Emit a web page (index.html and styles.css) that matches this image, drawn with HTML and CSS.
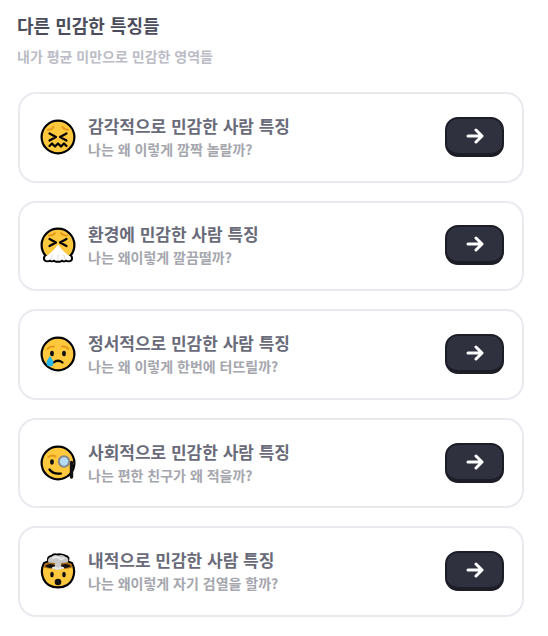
FILE: index.html
```html
<!DOCTYPE html>
<html lang="ko">
<head>
<meta charset="utf-8">
<meta name="viewport" content="width=device-width, initial-scale=1">
<title>다른 민감한 특징들</title>
<link rel="stylesheet" href="styles.css">
</head>
<body>
<main class="page">
  <header class="intro">
    <h1 class="intro-title">다른 민감한 특징들</h1>
    <p class="intro-sub">내가 평균 미만으로 민감한 영역들</p>
  </header>
  <ul class="cards">
    <li class="card">
      <svg class="face" viewBox="0 0 36 36" aria-hidden="true">
        <circle class="skin" cx="18" cy="18" r="16.4"/>
        <path class="brow" d="M8 10.800q4 0 5.500-2.800M28 10.800q-4 0-5.500-2.800"/>
        <path class="line" d="M9.500 14.500l6.500 3.500-6.500 3.500M26.500 14.500l-6.500 3.500 6.500 3.500M9.500 27l2.500-2.500 3 3 3-3 3 3 3-3 2.500 2.500"/>
      </svg>
      <div class="copy">
        <h2 class="name">감각적으로 민감한 사람 특징</h2>
        <p class="desc">나는 왜 이렇게 깜짝 놀랄까?</p>
      </div>
      <button class="go" type="button" aria-label="감각적으로 민감한 사람 특징 보기"><svg class="arrow" viewBox="0 0 18 16" aria-hidden="true"><path d="M2 8h14M10 2l6 6-6 6"/></svg></button>
    </li>
    <li class="card">
      <svg class="face" viewBox="0 0 36 36" aria-hidden="true">
        <circle class="skin" cx="18" cy="18" r="16.4"/>
        <path class="brow" d="M9 8.500q4 .5 6-2.500M27 8.500q-4 .5-6-2.500"/>
        <path class="line" d="M9.500 12l6.500 3.500-6.500 3.500M26.500 12l-6.500 3.500 6.500 3.500"/>
        <path class="tissue-edge" d="M5 30q-1 3.500 2 3.500 2 0 3-1 2 2 4 0 2 2 4 1 2 1 4-1 2 2 4 0 1 1 3 1 3 0 2-3.500z"/>
        <path class="tissue" d="M18 17.500Q13 25 5.500 29.500q-1.500 3.500 1.500 4 2 0 3-1 2 2 4 0 2 2 4 1 2 1 4-1 2 2 4 0 1 1 3 1 3-.5 1.500-4Q23 25 18 17.500z"/>
        <path class="fold" d="M12.500 28l-1.500 4M23.500 28l1.500 4M18 28v4"/>
      </svg>
      <div class="copy">
        <h2 class="name">환경에 민감한 사람 특징</h2>
        <p class="desc">나는 왜이렇게 깔끔떨까?</p>
      </div>
      <button class="go" type="button" aria-label="환경에 민감한 사람 특징 보기"><svg class="arrow" viewBox="0 0 18 16" aria-hidden="true"><path d="M2 8h14M10 2l6 6-6 6"/></svg></button>
    </li>
    <li class="card">
      <svg class="face" viewBox="0 0 36 36" aria-hidden="true">
        <circle class="skin" cx="18" cy="18" r="16.4"/>
        <path class="brow" d="M7.500 13q2-3 6.500-2.500M28.500 13q-2-3-6.500-2.500"/>
        <ellipse class="ink" cx="12" cy="17.500" rx="1.900" ry="2.800"/>
        <ellipse class="ink" cx="24" cy="17.500" rx="1.900" ry="2.800"/>
        <path class="line" d="M13.500 26.500q4.500-3.500 9 0"/>
        <path class="tear" d="M10 20q-3.500 4.500-3.500 7a3.500 3.500 0 0 0 7 0q0-2.500-3.500-7z"/>
      </svg>
      <div class="copy">
        <h2 class="name">정서적으로 민감한 사람 특징</h2>
        <p class="desc">나는 왜 이렇게 한번에 터뜨릴까?</p>
      </div>
      <button class="go" type="button" aria-label="정서적으로 민감한 사람 특징 보기"><svg class="arrow" viewBox="0 0 18 16" aria-hidden="true"><path d="M2 8h14M10 2l6 6-6 6"/></svg></button>
    </li>
    <li class="card">
      <svg class="face" viewBox="0 0 36 36" aria-hidden="true">
        <circle class="skin" cx="18" cy="18" r="16.4"/>
        <path class="brow" d="M8.500 12q3-2.500 7-.5"/>
        <ellipse class="ink" cx="12" cy="17" rx="1.900" ry="2.800"/>
        <path class="line" d="M9.500 24.500q3.500 5 11.500 4"/>
        <path class="cord" d="M31.500 17.500v14.500"/>
        <circle class="lens" cx="24" cy="16.500" r="5.200"/>
      </svg>
      <div class="copy">
        <h2 class="name">사회적으로 민감한 사람 특징</h2>
        <p class="desc">나는 편한 친구가 왜 적을까?</p>
      </div>
      <button class="go" type="button" aria-label="사회적으로 민감한 사람 특징 보기"><svg class="arrow" viewBox="0 0 18 16" aria-hidden="true"><path d="M2 8h14M10 2l6 6-6 6"/></svg></button>
    </li>
    <li class="card">
      <svg class="face" viewBox="0 0 36 36" aria-hidden="true">
        <path class="skin" d="M4 10C-1 20 3 34.400 18 34.400S37 20 32 10L27 8H9z"/>
        <path class="crater" d="M4.500 11q3-2 7-2h13q4 0 7 2l1 3q-2 2-14 2T3.500 14z"/>
        <path class="ink" d="M5 13q6-4 11 0-5 4-11 0zM31 13q-6-4-11 0 5 4 11 0z"/>
        <path class="cloud-edge" d="M9 7.500q-1-3.500 3-4 2-2 5-1 2-1 5 0 2 0 3 1 4 .5 2 4z"/>
        <path class="cloud" d="M8.500 9.500q-2-4.500 3.500-6 2-2.500 6-1 5-1.500 7 1 5 1.500 2.500 6l-6.500 .5v6.500h-6v-6.500z"/>
        <path class="puff" d="M13 5q4-2 6 0t5 0M13 15q2-1 3 .5h4q1-1.500 3-.5"/>
        <ellipse class="ink" cx="12" cy="21.500" rx="1.800" ry="2.800"/>
        <ellipse class="ink" cx="24" cy="21.500" rx="1.800" ry="2.800"/>
        <circle class="ink" cx="18" cy="29" r="3.300"/>
      </svg>
      <div class="copy">
        <h2 class="name">내적으로 민감한 사람 특징</h2>
        <p class="desc">나는 왜이렇게 자기 검열을 할까?</p>
      </div>
      <button class="go" type="button" aria-label="내적으로 민감한 사람 특징 보기"><svg class="arrow" viewBox="0 0 18 16" aria-hidden="true"><path d="M2 8h14M10 2l6 6-6 6"/></svg></button>
    </li>
  </ul>
</main>
</body>
</html>
```
FILE: styles.css
```css
* {
  box-sizing: border-box;
}

body {
  margin: 0;
  background: #fff;
  font-family: "Noto Sans CJK KR", "Noto Sans", sans-serif;
  font-weight: 700;
}

h1, h2, p, ul {
  margin: 0;
  padding: 0;
}

.page {
  display: flex;
  flex-direction: column;
  min-height: 100vh;
  padding: 11px 24px 19px 17px;
}

.intro {
  display: grid;
  gap: 5px;
  margin-bottom: 24px;
}

.intro-title {
  font-size: 18px;
  line-height: 28px;
  color: #4b4d5c;
}

.intro-sub {
  font-size: 14px;
  line-height: 24px;
  color: #bbbcc6;
}

.cards {
  flex: 1;
  display: grid;
  grid-auto-rows: 1fr;
  gap: 18px;
  padding-left: 1px;
  list-style: none;
}

.card {
  display: flex;
  align-items: center;
  gap: 12px;
  padding: 19px 18px 20px 20px;
  border: 2px solid #e9e9f0;
  border-radius: 18px;
}

.face {
  flex: none;
  width: 36px;
  height: 36px;
}

.copy {
  flex: 1;
  min-width: 0;
}

.name {
  font-size: 17px;
  line-height: 24px;
  color: #696b7a;
}

.desc {
  font-size: 14px;
  line-height: 22px;
  color: #a5a6ae;
}

.go {
  flex: none;
  display: grid;
  place-items: center;
  width: 59px;
  height: 40px;
  padding: 0;
  border: 2px solid #1c1d27;
  border-bottom-width: 4px;
  border-radius: 13px;
  background: #2f313e;
  cursor: pointer;
}

.arrow {
  width: 18px;
  height: 16px;
  fill: none;
  stroke: #fff;
  stroke-width: 3;
  stroke-linecap: round;
  stroke-linejoin: round;
}

.skin {
  fill: #ffc83d;
  stroke: #000;
  stroke-width: 2.2;
}

.brow, .line, .fold, .cord, .puff {
  fill: none;
  stroke-linecap: round;
  stroke-linejoin: round;
}

.brow {
  stroke: #e39a1b;
  stroke-width: 2;
}

.line {
  stroke: #000;
  stroke-width: 2.2;
}

.ink {
  fill: #111;
}

.fold {
  stroke: #dcdce2;
  stroke-width: 1;
}

.puff {
  stroke: #e8e8e8;
  stroke-width: 2;
}

.cord {
  stroke: #111;
  stroke-width: 3.4;
}

.lens {
  fill: #b4dcf5;
  stroke: #85888f;
  stroke-width: 2;
}

.tear {
  fill: #29b6e8;
}

.tissue {
  fill: #fff;
}

.tissue-edge, .cloud-edge {
  fill: #000;
  stroke: #000;
  stroke-width: 3.6;
  stroke-linejoin: round;
}

.cloud {
  fill: #c8c8c8;
}

.crater {
  fill: #a86912;
}
```
